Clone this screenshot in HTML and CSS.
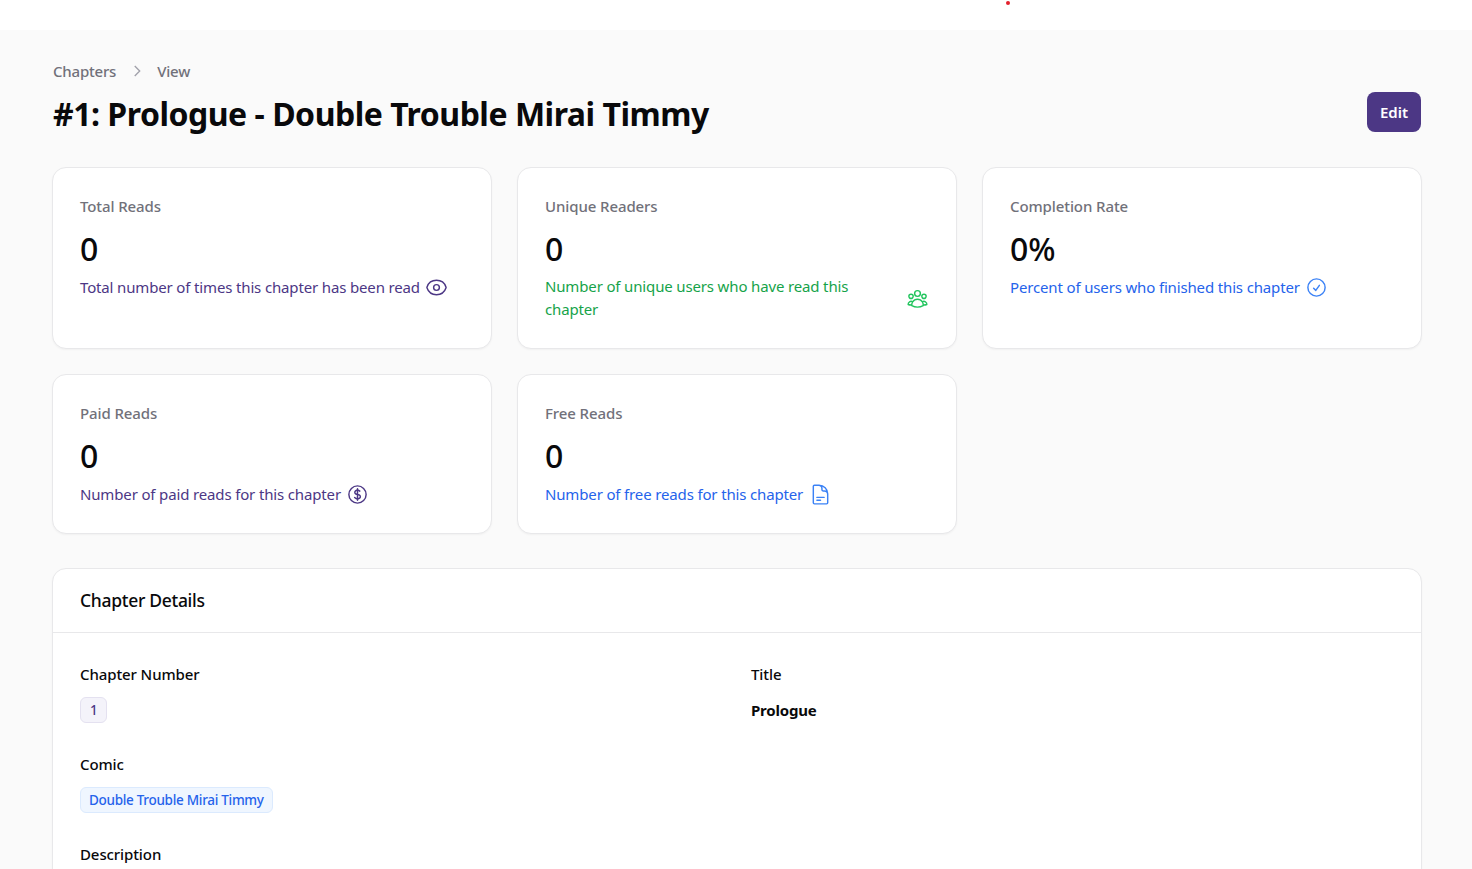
FILE: index.html
```html
<!DOCTYPE html>
<html lang="en">
<head>
  <meta charset="UTF-8">
  <meta name="viewport" content="width=device-width, initial-scale=1.0">
  <title>View Chapter</title>
  <link rel="stylesheet" href="styles.css">
</head>
<body>
  <div class="topbar"><span class="dot"></span></div>

  <main class="page">
    <header class="page-header">
      <div>
        <nav class="breadcrumbs">
          <span>Chapters</span>
          <svg class="crumb-sep" viewBox="0 0 20 20" fill="none" stroke="currentColor" stroke-width="1.5"><path d="M7.5 4.5 13 10l-5.5 5.5"/></svg>
          <span>View</span>
        </nav>
        <h1>#1: Prologue - Double Trouble Mirai Timmy</h1>
      </div>
      <button class="button">Edit</button>
    </header>

    <div class="stats">
      <div class="card">
        <div class="card-label">Total Reads</div>
        <div class="card-value">0</div>
        <div class="card-desc purple">
          <span>Total number of times this chapter has been read</span>
          <svg class="icon" viewBox="0 0 24 24" fill="none" stroke="currentColor" stroke-width="1.5" stroke-linecap="round" stroke-linejoin="round"><path d="M2.036 12.322a1.012 1.012 0 010-.639C3.423 7.51 7.36 4.5 12 4.5c4.638 0 8.573 3.007 9.963 7.178.07.207.07.431 0 .639C20.577 16.49 16.64 19.5 12 19.5c-4.638 0-8.573-3.007-9.963-7.178z"/><path d="M15 12a3 3 0 11-6 0 3 3 0 016 0z"/></svg>
        </div>
      </div>
      <div class="card">
        <div class="card-label">Unique Readers</div>
        <div class="card-value">0</div>
        <div class="card-desc green">
          <span class="narrow">Number of unique users who have read this chapter</span>
          <svg class="icon push" viewBox="0 0 24 24" fill="none" stroke="currentColor" stroke-width="1.5" stroke-linecap="round" stroke-linejoin="round"><path d="M18 18.72a9.094 9.094 0 003.741-.479 3 3 0 00-4.682-2.72m.94 3.198l.001.031c0 .225-.012.447-.037.666A11.944 11.944 0 0112 21c-2.17 0-4.207-.576-5.963-1.584A6.062 6.062 0 016 18.719m12 0a5.971 5.971 0 00-.941-3.197m0 0A5.995 5.995 0 0012 12.75a5.995 5.995 0 00-5.058 2.772m0 0a3 3 0 00-4.681 2.72 8.986 8.986 0 003.74.477m.94-3.197a5.971 5.971 0 00-.94 3.197M15 6.75a3 3 0 11-6 0 3 3 0 016 0zm6 3a2.25 2.25 0 11-4.5 0 2.25 2.25 0 014.5 0zm-13.5 0a2.25 2.25 0 11-4.5 0 2.25 2.25 0 014.5 0z"/></svg>
        </div>
      </div>
      <div class="card">
        <div class="card-label">Completion Rate</div>
        <div class="card-value">0%</div>
        <div class="card-desc blue">
          <span>Percent of users who finished this chapter</span>
          <svg class="icon" viewBox="0 0 24 24" fill="none" stroke="currentColor" stroke-width="1.5" stroke-linecap="round" stroke-linejoin="round"><path d="M9 12.75L11.25 15 15 9.75M21 12a9 9 0 11-18 0 9 9 0 0118 0z"/></svg>
        </div>
      </div>
      <div class="card">
        <div class="card-label">Paid Reads</div>
        <div class="card-value">0</div>
        <div class="card-desc purple">
          <span>Number of paid reads for this chapter</span>
          <svg class="icon" viewBox="0 0 24 24" fill="none" stroke="currentColor" stroke-width="1.5" stroke-linecap="round" stroke-linejoin="round"><path d="M12 6v12m-3-2.818l.879.659c1.171.879 3.07.879 4.242 0 1.172-.879 1.172-2.303 0-3.182C13.536 12.219 12.768 12 12 12c-.725 0-1.45-.22-2.003-.659-1.106-.879-1.106-2.303 0-3.182s2.9-.879 4.006 0l.415.33M21 12a9 9 0 11-18 0 9 9 0 0118 0z"/></svg>
        </div>
      </div>
      <div class="card">
        <div class="card-label">Free Reads</div>
        <div class="card-value">0</div>
        <div class="card-desc blue">
          <span>Number of free reads for this chapter</span>
          <svg class="icon" viewBox="0 0 24 24" fill="none" stroke="currentColor" stroke-width="1.5" stroke-linecap="round" stroke-linejoin="round"><path d="M19.5 14.25v-2.625a3.375 3.375 0 00-3.375-3.375h-1.5A1.125 1.125 0 0113.5 7.125v-1.5a3.375 3.375 0 00-3.375-3.375H8.25m0 12.75h7.5m-7.5 3H12M10.5 2.25H5.625c-.621 0-1.125.504-1.125 1.125v17.25c0 .621.504 1.125 1.125 1.125h12.75c.621 0 1.125-.504 1.125-1.125V11.25a9 9 0 00-9-9z"/></svg>
        </div>
      </div>
    </div>

    <section class="details">
      <h2>Chapter Details</h2>
      <div class="details-grid">
        <div class="field">
          <div class="field-label">Chapter Number</div>
          <span class="badge badge-purple">1</span>
        </div>
        <div class="field">
          <div class="field-label">Title</div>
          <div class="field-value">Prologue</div>
        </div>
        <div class="field">
          <div class="field-label">Comic</div>
          <span class="badge badge-blue">Double Trouble Mirai Timmy</span>
        </div>
        <div class="field"></div>
        <div class="field">
          <div class="field-label">Description</div>
        </div>
      </div>
    </section>
  </main>
</body>
</html>
```

FILE: styles.css
```css
html, body {
  margin: 0;
  height: 869px;
  overflow: hidden;
}
body {
  font-family: "Noto Sans", "Open Sans", sans-serif;
  background: #fafafa;
  color: #09090b;
}
.topbar {
  position: relative;
  height: 30px;
  background: #fff;
}
.dot {
  position: absolute;
  left: 1006px;
  top: 1px;
  width: 4px;
  height: 4px;
  border-radius: 50%;
  background: #e3202c;
}
.page {
  padding: 29px 50px 0 52px;
}
.page-header {
  display: flex;
  justify-content: space-between;
  align-items: flex-start;
}
.breadcrumbs {
  display: flex;
  align-items: center;
  gap: 11.5px;
  height: 23px;
  font-size: 15px;
  font-weight: 500;
  color: #71717a;
  letter-spacing: -0.2px;
  margin-left: 1px;
}
.crumb-sep {
  width: 18px;
  height: 18px;
  color: #a1a1aa;
}
h1 {
  margin: 11px 0 0 1px;
  font-size: 32px;
  line-height: 42px;
  font-weight: 700;
  letter-spacing: -0.48px;
  color: #09090b;
}
.button {
  margin: 33px 1px 0 0;
  width: 54px;
  height: 40px;
  padding: 0;
  border: none;
  border-radius: 8px;
  background: #4c3785;
  color: #fff;
  font-family: inherit;
  font-size: 15px;
  font-weight: 600;
}
.stats {
  display: grid;
  grid-template-columns: repeat(3, 1fr);
  gap: 25px;
  margin-top: 32px;
}
.card {
  background: #fff;
  border: 1px solid #e8e8ea;
  border-radius: 14px;
  padding: 27px 27px 27px;
  box-shadow: 0 1px 2px rgba(0,0,0,0.04);
}
.card-label {
  font-size: 15px;
  line-height: 23px;
  font-weight: 500;
  color: #71717a;
  letter-spacing: -0.1px;
}
.card-value {
  margin-top: 11px;
  font-size: 32px;
  line-height: 40px;
  font-weight: 500;
  color: #09090b;
}
.card-desc {
  display: flex;
  align-items: center;
  gap: 5.5px;
  margin-top: 6px;
  min-height: 24px;
  font-size: 15px;
  line-height: 23px;
  letter-spacing: -0.15px;
}
.narrow {
  max-width: 330px;
}
.push {
  margin-left: auto;
}
.icon {
  flex: none;
  width: 23px;
  height: 23px;
}
.purple { color: #4c3785; }
.green { color: #16a34a; }
.green .icon { color: #22c55e; }
.blue { color: #2563eb; }
.blue .icon { color: #3b82f6; }
.details {
  margin-top: 34px;
  background: #fff;
  border: 1px solid #e8e8ea;
  border-radius: 14px;
  box-shadow: 0 1px 2px rgba(0,0,0,0.04);
  height: 500px;
}
h2 {
  margin: 0;
  padding: 0 27px;
  height: 63px;
  line-height: 63px;
  font-size: 17.5px;
  font-weight: 500;
  letter-spacing: -0.3px;
  border-bottom: 1px solid #e8e8ea;
}
.details-grid {
  display: grid;
  grid-template-columns: 1fr 1fr;
  column-gap: 28px;
  grid-auto-rows: 90px;
  padding: 30px 27px;
}
.field-label {
  font-size: 15px;
  line-height: 23px;
  font-weight: 500;
  letter-spacing: -0.1px;
  color: #09090b;
}
.field-value {
  margin-top: 13px;
  font-size: 15px;
  line-height: 23px;
  font-weight: 700;
  letter-spacing: -0.2px;
}
.badge {
  display: inline-block;
  margin-top: 11px;
  height: 24px;
  line-height: 24px;
  border-radius: 6px;
  font-size: 13.5px;
  font-weight: 500;
  letter-spacing: -0.3px;
}
.badge-purple {
  padding: 0 9px;
  background: #f4f3fa;
  border: 1px solid #e4e1f0;
  color: #4c3785;
}
.badge-blue {
  padding: 0 8px;
  background: #eff6ff;
  border: 1px solid #dbeafe;
  color: #2563eb;
}
```
